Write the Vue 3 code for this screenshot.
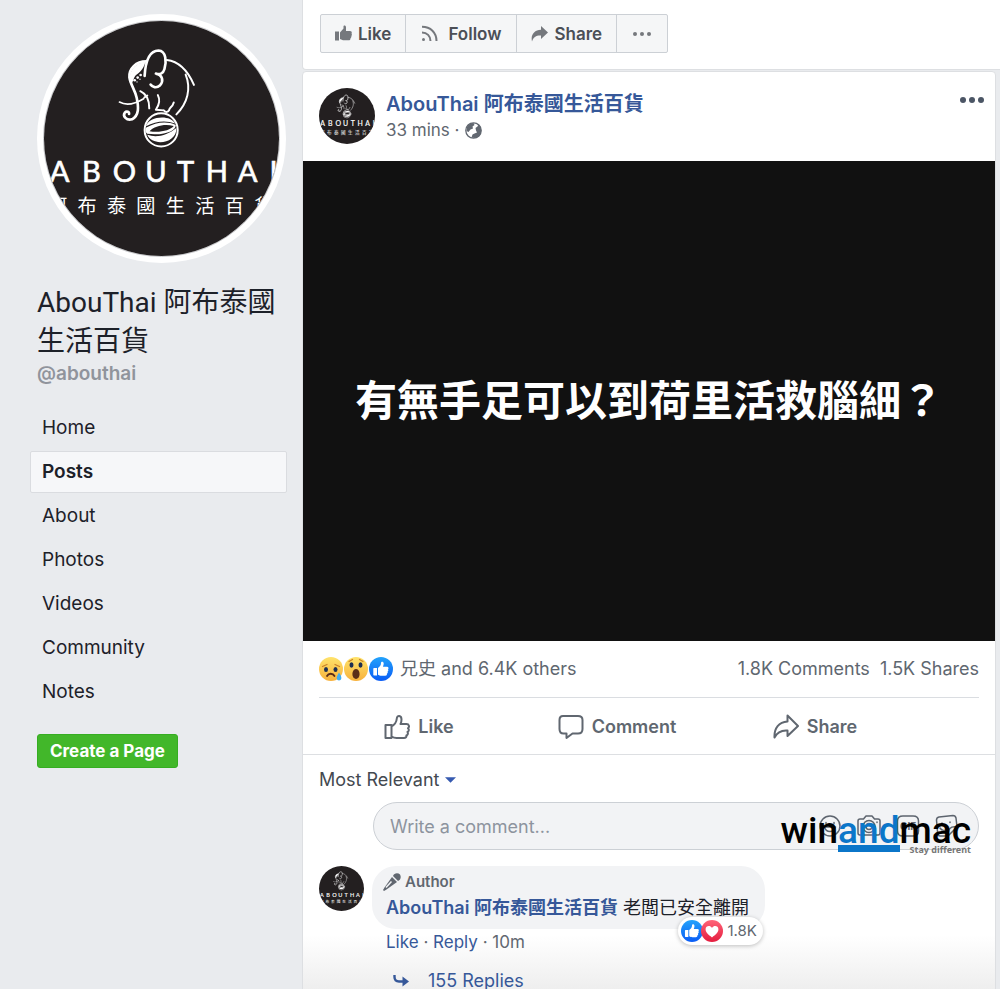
<script setup>
import { ref } from 'vue'

const pageName = 'AbouThai 阿布泰國生活百貨'
const wordmark = [
  ['A', 87], ['B', 183], ['O', 283], ['U', 378],
  ['T', 468], ['H', 562], ['A', 655], ['I', 734],
]
const wordmarkSub = [...'阿布泰國生活百貨']
const nav = ['Home', 'Posts', 'About', 'Photos', 'Videos', 'Community', 'Notes']
const active = ref('Posts')
const sort = ref('relevant')
const draft = ref('')
</script>

<template>
  <div class="page">
    <svg class="defs" aria-hidden="true">
      <defs>
        <linearGradient id="face" x1="0" y1="0" x2="0" y2="1">
          <stop offset="0" stop-color="#ffe36b" />
          <stop offset="1" stop-color="#f7b13c" />
        </linearGradient>
        <linearGradient id="blue" x1="0" y1="0" x2="0" y2="1">
          <stop offset="0" stop-color="#22a2fb" />
          <stop offset="1" stop-color="#0a5cf5" />
        </linearGradient>
        <linearGradient id="red" x1="0" y1="0" x2="0" y2="1">
          <stop offset="0" stop-color="#ff6478" />
          <stop offset="1" stop-color="#e41d3f" />
        </linearGradient>
        <symbol id="logo" viewBox="40 60 710 710">
          <rect x="40" y="60" width="710" height="710" fill="#231f20" />
          <g fill="none" stroke="#fff" stroke-width="8" stroke-linecap="round" stroke-linejoin="round">
            <path d="M344 226C346 190 355 150 386 149C410 150 410 185 404 205C400 220 389 223 378 219C398 223 403 241 390 255C380 264 367 260 362 252" />
            <path d="M349 182C318 182 296 204 298 230C301 252 315 268 320 292C326 320 328 345 306 357C289 362 277 347 284 337C290 331 298 335 297 341" />
            <path d="M268 305C288 316 316 310 341 295" stroke-width="5" />
            <path d="M411 178C446 182 473 207 493 253" stroke-width="6" />
            <path d="M468 222C485 264 474 309 440 342" stroke-width="6" />
            <path d="M331 272C349 280 358 299 358 324M343 291L352 285" stroke-width="6" />
            <path d="M384 284C393 301 387 315 378 328L402 330M402 330C407 336 414 337 418 330C418 321 428 321 432 306" stroke-width="6" />
            <circle cx="394" cy="389" r="50" stroke-width="6" />
          </g>
          <path d="M346 184C311 188 293 215 300 250C312 249 307 231 321 221C333 213 342 202 346 184Z" fill="#fff" />
          <g fill="#fff">
            <circle cx="314" cy="239" r="4" /><circle cx="323" cy="231" r="4" /><circle cx="332" cy="223" r="4" />
            <circle cx="321" cy="244" r="2" /><circle cx="330" cy="236" r="2" />
            <path d="M348 378C356 346 424 342 436 370C407 358 377 363 348 378Z" />
            <path d="M352 404C383 414 414 404 440 383C442 431 367 440 352 404Z" />
            <path d="M349 382C378 366 410 361 438 374C439 390 408 407 352 401C345 395 345 386 349 382ZM359 393C391 398 422 390 432 377C402 370 374 378 359 393Z" fill-rule="evenodd" />
          </g>
          <g class="logo-latin">
            <text v-for="([c, x], i) in wordmark" :key="i" :x="x" y="545">{{ c }}</text>
          </g>
          <g class="logo-han">
            <text v-for="(c, i) in wordmarkSub" :key="i" :x="81 + i * 89" y="640">{{ c }}</text>
          </g>
        </symbol>
        <symbol id="r-like" viewBox="0 0 24 24">
          <circle cx="12" cy="12" r="12" fill="url(#blue)" />
          <path d="M5 11H8V18.500H5C4.500 18.500 4.300 18.300 4.300 17.800V11.700C4.300 11.200 4.500 11 5 11ZM9 11C11 9.500 12 8 12 6C12 4 14.700 4.200 14.700 6.500C14.700 7.800 14.200 9 14 9.700H18C19.600 9.700 20 11.700 18.900 12.300C19.700 13 19.400 14.300 18.500 14.600C19 15.300 18.800 16.400 17.900 16.700C18.200 17.800 17.500 18.700 16.200 18.700H12.500C11 18.700 10 18.200 9 17.700Z" fill="#fff" />
        </symbol>
        <symbol id="r-love" viewBox="0 0 24 24">
          <circle cx="12" cy="12" r="12" fill="url(#red)" />
          <path d="M12 19C8 16.200 5 13.600 5 10.200C5 6.200 10 5.400 12 8.700C14 5.400 19 6.200 19 10.200C19 13.600 16 16.200 12 19Z" fill="#fff" />
        </symbol>
        <symbol id="thumb" viewBox="0 0 26 26">
          <path d="M1.500 11H7.500V24H1.500ZM7.500 12.500C11 10.500 12.500 8 12.800 4.500C13 1 17.500 1 17.500 5.500C17.500 7.500 17 9 16.500 10H22.500C25.200 10 25.700 13 24 14.200C25.400 15.400 24.800 17.500 23.500 18C24.400 19.400 23.700 21 22.400 21.400C22.800 22.800 21.700 24 20 24H12.500C10.500 24 9 23.400 7.500 22.500Z" />
        </symbol>
      </defs>
    </svg>

    <aside class="sidebar">
      <a class="cover" href="#"><svg class="avatar" role="img" aria-label="ABOUTHAI"><use href="#logo" /></svg></a>
      <h1>{{ pageName }}</h1>
      <a class="handle" href="#">@abouthai</a>
      <nav>
        <a v-for="n in nav" :key="n" href="#" :class="{ on: n === active }" @click.prevent="active = n">{{ n }}</a>
      </nav>
      <button class="create">Create a Page</button>
    </aside>

    <main>
      <section class="card toolbar">
        <div class="group">
          <button>
            <svg width="17" height="17" viewBox="0 0 17 17" fill="#75787d"><path d="M0 6.500H4V15.500H0ZM5 7.500L8.500 3.500V1.500C8.500 0 11 0 11 2.500V6H15C17 6 17 8 16.500 8.500C17.200 9.500 16.800 10.500 16.300 11C16.700 12 16 13 15.500 13.200C15.500 14.800 14.700 15.300 13.500 15.300H8L5 14Z" /></svg>
            Like
          </button>
          <button class="follow">
            <svg width="17" height="17" viewBox="0 0 17 17" fill="none" stroke="#75787d" stroke-width="2"><circle cx="2.500" cy="14.500" r="1.500" fill="#75787d" stroke="none" /><path d="M1 7.500C6 7.500 9.500 11 9.500 16M1 1.800C9.500 1.800 15.500 7.500 15.500 16" /></svg>
            Follow
          </button>
          <button>
            <svg width="17" height="17" viewBox="0 0 17 17" fill="#75787d"><path d="M10 1L17 7.500L10 14V10.500C5 10.300 2.500 12 1 16.500C-.5 10 3 5 10 4.700Z" /></svg>
            Share
          </button>
          <button class="more" aria-label="More">
            <svg width="18" height="4" viewBox="0 0 18 4" fill="#75787d"><circle cx="2" cy="2" r="2" /><circle cx="9" cy="2" r="2" /><circle cx="16" cy="2" r="2" /></svg>
          </button>
        </div>
      </section>

      <article class="card post">
        <header>
          <svg class="avatar mid" role="img" aria-label="ABOUTHAI"><use href="#logo" /></svg>
          <div class="who">
            <a class="name" href="#">{{ pageName }}</a>
            <div class="meta">
              33 mins ·
              <svg width="17" height="17" viewBox="0 0 17 17"><circle cx="8.500" cy="8.500" r="7.700" fill="#fff" stroke="#616770" stroke-width="1.300" /><path d="M2 5C3.500 2 6 1 8.500 1L9.500 3L7.500 4.500L8 6.500L5.500 7.500L3.500 10L1.500 9ZM10.500 6L13 4L12.500 2L15 4C17 8 16.500 12 13.500 14.700L10 16L6.500 15.500L7.500 12.500L9.500 11.500L12 10.500L11 8.500Z" fill="#616770" /></svg>
            </div>
          </div>
          <button class="dots" aria-label="Post options">
            <svg width="24" height="6" viewBox="0 0 24 6" fill="#4b5565"><circle cx="3" cy="3" r="3" /><circle cx="12" cy="3" r="3" /><circle cx="21" cy="3" r="3" /></svg>
          </button>
        </header>

        <div class="banner"><p>有無手足可以到荷里活救腦細？</p></div>

        <div class="stats">
          <div class="reacts">
            <svg class="emo" viewBox="0 0 24 24">
              <circle cx="12" cy="12" r="12" fill="url(#face)" />
              <path d="M3.500 9.500L8 7.500M20.500 9.500L16 7.500" stroke="#c9822a" stroke-width="1.300" stroke-linecap="round" />
              <ellipse cx="7" cy="12.500" rx="2" ry="2.500" fill="#1e2f52" /><ellipse cx="16.500" cy="12.500" rx="2" ry="2.500" fill="#1e2f52" />
              <path d="M8 19C9.500 16 14 16 15.500 19" fill="none" stroke="#5b2d18" stroke-width="1.800" stroke-linecap="round" />
              <path d="M20 15.500C22 18.500 22.500 20 22.300 21.500C22 24 18 24 17.700 21.500C17.500 20 18.500 18 20 15.500Z" fill="#43aef0" />
            </svg>
            <svg class="emo" viewBox="0 0 24 24">
              <circle cx="12" cy="12" r="12" fill="url(#face)" />
              <path d="M5 4.500L8.500 2.500M19 4.500L15.500 2.500" stroke="#c9822a" stroke-width="1.300" stroke-linecap="round" />
              <ellipse cx="7.500" cy="8" rx="2" ry="2.700" fill="#1e2f52" /><ellipse cx="16.500" cy="8" rx="2" ry="2.700" fill="#1e2f52" />
              <ellipse cx="12" cy="17" rx="3.600" ry="5" fill="#5b2d18" />
            </svg>
            <svg class="emo"><use href="#r-like" /></svg>
            <a href="#">兄史 and 6.4K others</a>
          </div>
          <div class="counts"><a href="#">1.8K Comments</a><a href="#">1.5K Shares</a></div>
        </div>

        <div class="actions">
          <button>
            <svg width="26" height="26"><use href="#thumb" /></svg>
            Like
          </button>
          <button>
            <svg width="26" height="26" viewBox="0 0 26 26"><path d="M5 2H20C23 2 24.500 3.500 24.500 6V15C24.500 18 23 19.500 20 19.500H14.500L8.500 24V19.500H5.500C3 19.500 1.500 18 1.500 15V6C1.500 3.500 3 2 5 2Z" /></svg>
            Comment
          </button>
          <button>
            <svg width="26" height="26" viewBox="0 0 26 26"><path d="M14.500 1.500L25 12L14.500 22V16.500C8 16 4 18.500 1.500 23.500C1 14 6 8 14.500 7.500Z" /></svg>
            Share
          </button>
        </div>

        <div class="comments">
          <label class="sort">
            <select v-model="sort" aria-label="Comment order">
              <option value="relevant">Most Relevant</option>
            </select>
            <svg width="11" height="6" viewBox="0 0 12 6"><path d="M0 0H12L6 6Z" fill="#365ab0" /></svg>
          </label>

          <div class="compose">
            <input v-model="draft" type="text" placeholder="Write a comment..." aria-label="Write a comment">
            <div class="tools">
              <button aria-label="Emoji"><svg viewBox="0 0 24 24"><circle cx="12" cy="12" r="10" /><path d="M6.500 13C8 19 16 19 17.500 13ZM8 8.500V9.500M16 8.500V9.500" /></svg></button>
              <button aria-label="Photo"><svg viewBox="0 0 24 24"><path d="M3 5H6.500L9 2H15L17.500 5H21C22 5 23 6 23 7V19C23 20.500 22 21 21 21H3C2 21 1 20 1 19V7C1 6 2 5 3 5Z" /><circle cx="12" cy="12.500" r="6" /><circle cx="12" cy="12.500" r="3" /><path d="M20 8V8.500" /></svg></button>
              <button aria-label="GIF"><svg viewBox="0 0 24 24"><path d="M7 2H17C21 2 22.500 4 22.500 7V17C22.500 20 21 22 17 22H7C3 22 1.500 20 1.500 17V7C1.500 4 3 2 7 2Z" /><text x="12" y="16">GIF</text></svg></button>
              <button aria-label="Sticker"><svg viewBox="0 0 24 24"><path d="M4 3L18 1.500C20 1.500 20.500 2 21 4L22 13L13 22H5C3.500 22 3 21 2.700 20L1.500 6C1.500 4 2 3.500 4 3ZM22 13C15 12 13 15 13 22M7 9V9.500M15 8V8.500M5 14C7 17 10 17 12 15" /></svg></button>
            </div>
            <div class="mark">
              <div class="mark-word">win<span>and</span>mac</div>
              <div class="mark-tag">Stay different</div>
            </div>
          </div>

          <div class="comment">
            <svg class="avatar small" role="img" aria-label="ABOUTHAI"><use href="#logo" /></svg>
            <div class="thread">
              <div class="bubble">
                <div class="author">
                  <svg width="18" height="18" viewBox="0 0 18 18" fill="#616770"><path d="M9 4L14 9L3.500 16.500L1 18L0 17L1.500 14.500Z" /><path d="M10 3C11 0 15 -.5 17 1.500C18.500 4 17.500 7 15 8Z" /><path d="M3 14.500L8.500 8.500" stroke="#f1f2f4" stroke-width="1.500" /></svg>
                  Author
                </div>
                <p><a class="name" href="#">{{ pageName }}</a> 老闆已安全離開</p>
                <div class="pill"><svg><use href="#r-like" /></svg><svg><use href="#r-love" /></svg>1.8K</div>
              </div>
              <div class="links"><a href="#">Like</a> · <a href="#">Reply</a> · 10m</div>
              <a class="replies" href="#">
                <svg width="16" height="14" viewBox="0 0 16 14"><path d="M1.500 1V3C1.500 6 3 7.500 6 7.500H11" fill="none" stroke="#365899" stroke-width="2.400" /><path d="M9.500 2.500L16 7.500L9.500 12.500Z" fill="#365899" /></svg>
                155 Replies
              </a>
            </div>
          </div>
        </div>
      </article>
    </main>
  </div>
</template>

<style>
body { margin: 0; background: #e9ebee; }
</style>

<style scoped>
* { box-sizing: border-box; }
.page {
  height: 100vh;
  overflow: hidden;
  display: grid;
  grid-template-columns: 302px minmax(0, 1fr);
  background: #e9ebee;
  color: #1d2129;
  font: 18px/24px Inter, "Noto Sans CJK TC", sans-serif;
}
.defs { position: absolute; width: 0; height: 0; }
a { color: inherit; text-decoration: none; }
button { border: 0; background: none; padding: 0; margin: 0; font: inherit; color: inherit; cursor: pointer; }
svg { display: block; flex: none; }
p, h1 { margin: 0; }
.avatar { border-radius: 50%; }
.logo-latin { font: 88px Lato, sans-serif; fill: #fff; stroke: #fff; stroke-width: 2px; text-anchor: middle; }
.logo-han { font: 58px "Noto Sans CJK TC", sans-serif; fill: #fff; text-anchor: middle; }

.sidebar { padding: 14px 15px 0 30px; }
.cover { display: block; width: 249px; height: 249px; margin-left: 7px; padding: 6px; border-radius: 50%; background: #fff; }
.cover .avatar { width: 237px; height: 237px; border: 1px solid #c8c9cc; }
h1 { margin: 20px 0 0 7px; font: 400 28px/39px Roboto, "Noto Sans CJK TC", sans-serif; }
.handle { display: block; margin: 1px 0 0 7px; color: #90949c; font-size: 19px; font-weight: 600; }
nav { display: grid; gap: 2px; margin-top: 21px; font-size: 19px; }
nav a { height: 42px; padding: 0 11px; border: 1px solid transparent; border-radius: 2px; line-height: 40px; }
nav a.on { background: #f6f7f9; border-color: #dadce0; font-weight: 600; }
.create { margin: 21px 0 0 7px; padding: 0 12px; height: 34px; border: 1px solid #36ad22; border-radius: 3px; background: #42b72a; color: #fff; font-size: 17px; font-weight: 700; }

main { min-width: 0; padding-right: 4px; }
.card { background: #fff; border: 1px solid #dddfe2; }
.toolbar { height: 70px; margin-right: -5px; padding: 14px 17px; border-top: 0; border-radius: 0 0 0 4px; }
.group { display: inline-flex; border: 1px solid #ccd0d5; border-radius: 2px; background: #f5f6f7; color: #4b4f56; font-size: 17px; font-weight: 600; }
.group button { display: flex; align-items: center; gap: 6px; height: 37px; padding: 0 14px; }
.group button + button { border-left: 1px solid #ccd0d5; }
.group .follow { gap: 10px; padding: 0 15px; }
.group .more { padding: 0 16px; }

.post { margin-top: 1px; border-radius: 4px 4px 0 0; }
header { display: flex; height: 89px; padding: 16px 11px 0 16px; }
.mid { width: 56px; height: 56px; }
.who { flex: 1; min-width: 0; padding: 3px 0 0 11px; }
.name { color: #365899; font-weight: 600; }
.who .name { display: block; font-size: 20px; line-height: 26px; }
.meta { display: flex; align-items: center; gap: 5px; color: #616770; font-size: 17px; line-height: 26px; }
.dots { align-self: flex-start; padding: 9px 0; }
.banner { display: flex; align-items: center; justify-content: center; height: 480px; background: #111; color: #fff; }
.banner p { font-size: 42px; font-weight: 700; line-height: 60px; }

.stats { display: flex; justify-content: space-between; height: 57px; margin: 0 16px; border-bottom: 1px solid #dadde1; color: #606770; }
.reacts { display: flex; align-items: center; }
.emo { width: 24px; height: 24px; margin-right: 1px; }
.reacts a { margin-left: 6px; }
.counts { display: flex; align-items: center; gap: 10px; }
.actions { display: grid; grid-template-columns: repeat(3, 3fr) 1fr; height: 57px; padding: 2px 15px 0 17px; border-bottom: 1px solid #dddfe2; color: #606770; font-weight: 600; }
.actions button { display: flex; align-items: center; justify-content: center; gap: 8px; }
.actions svg { fill: none; stroke: #606770; stroke-width: 2; stroke-linejoin: round; }

.comments { padding: 13px 16px 20px; background: linear-gradient(#fff 180px, #ededed 238px); }
.sort { display: inline-flex; align-items: center; gap: 5px; height: 24px; vertical-align: top; }
select { appearance: none; border: 0; padding: 0; background: none; font: inherit; color: #444950; }
.compose { position: relative; margin: 10px 0 0 54px; }
.compose input { display: block; width: 100%; height: 48px; padding: 0 180px 0 16px; border: 1px solid #ccd0d5; border-radius: 24px; background: #f2f3f5; font: inherit; color: #1d2129; }
.compose input::placeholder { color: #8d949e; opacity: 1; }
.tools { position: absolute; top: 12px; right: 20px; display: flex; gap: 15px; }
.tools svg { width: 24px; height: 24px; fill: none; stroke: #5d646e; stroke-width: 1.500; stroke-linecap: round; stroke-linejoin: round; }
.tools text { font: 700 10px Inter, sans-serif; text-anchor: middle; fill: #5d646e; stroke: none; }
.mark { position: absolute; top: 8px; right: 8px; text-align: right; pointer-events: none; }
.mark-word { color: #000; font: 500 37px/42px Roboto, sans-serif; }
.mark-word span { display: inline-block; height: 42px; border-bottom: 7px solid #0b76c9; color: #0b76c9; }
.mark-tag { position: absolute; top: 34px; right: 0; color: #777; font: 700 9px/12px "Noto Sans", sans-serif; white-space: nowrap; }

.comment { display: flex; gap: 8px; margin-top: 16px; }
.small { width: 45px; height: 45px; }
.bubble { position: relative; width: fit-content; height: 63px; padding: 4px 16px 4px 14px; border-radius: 24px; background: #f2f3f5; }
.author { display: flex; align-items: center; gap: 4px; margin-left: -3px; color: #616770; font-size: 15px; font-weight: 600; }
.bubble p { line-height: 28px; white-space: nowrap; }
.pill { position: absolute; right: 2px; bottom: -16px; display: flex; align-items: center; height: 28px; padding: 0 6px 0 3px; border-radius: 14px; background: #fff; box-shadow: 0 1px 4px rgba(0, 0, 0, 0.25); color: #616770; font-size: 15px; }
.pill svg { width: 22px; height: 22px; }
.pill svg + svg { margin: 0 5px 0 -2px; }
.links { padding-left: 14px; color: #616770; font-size: 17px; line-height: 26px; }
.links a, .replies { color: #365899; }
.replies { display: flex; align-items: center; gap: 19px; margin: 14px 0 0 21px; }
</style>
